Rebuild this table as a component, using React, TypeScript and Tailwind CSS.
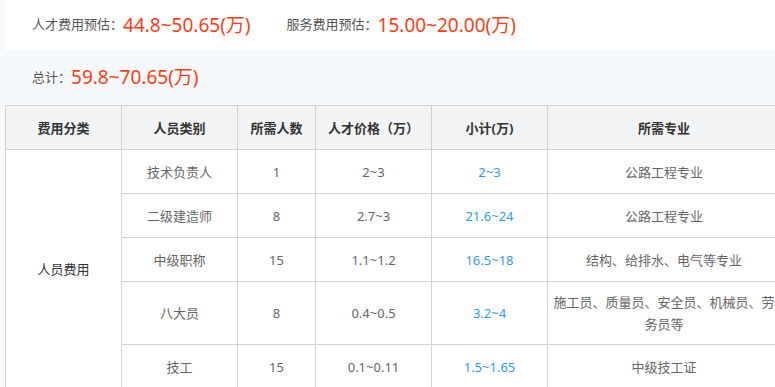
const rows = [
  { role: "技术负责人", count: "1", price: "2~3", subtotal: "2~3", major: "公路工程专业", h: "h-[44px]" },
  { role: "二级建造师", count: "8", price: "2.7~3", subtotal: "21.6~24", major: "公路工程专业", h: "h-[44px]" },
  { role: "中级职称", count: "15", price: "1.1~1.2", subtotal: "16.5~18", major: "结构、给排水、电气等专业", h: "h-[44px]" },
  { role: "八大员", count: "8", price: "0.4~0.5", subtotal: "3.2~4", major: "施工员、质量员、安全员、机械员、劳务员等", h: "h-[63px]" },
  { role: "技工", count: "15", price: "0.1~0.11", subtotal: "1.5~1.65", major: "中级技工证", h: "h-[44px]" },
];

const cell = "border border-[#d3d3d3] text-center align-middle px-[4px] leading-[22px]";

export default function App() {
  return (
    <div className="w-screen h-screen overflow-hidden bg-[#f5f9fc] font-['Noto_Sans','Noto_Sans_CJK_SC',sans-serif] text-[13px] text-[#666]">
      <div className="ml-[5px] h-[50px] bg-white flex items-center pl-[27px]">
        <span className="text-[13px] text-[#555]">人才费用预估：</span>
        <span className="text-[19px] text-[#ff3d12] mr-[36px]">44.8~50.65(万)</span>
        <span className="text-[13px] text-[#555]">服务费用预估：</span>
        <span className="text-[19px] text-[#ff3d12]">15.00~20.00(万)</span>
      </div>
      <div className="h-[55px] flex items-center pl-[32px]">
        <span className="text-[13px] text-[#555]">总计：</span>
        <span className="text-[19px] text-[#ff3d12]">59.8~70.65(万)</span>
      </div>
      <table className="ml-[5px] w-[775px] border-collapse table-fixed bg-white">
        <colgroup>
          <col className="w-[116px]" />
          <col className="w-[116px]" />
          <col className="w-[78px]" />
          <col className="w-[116px]" />
          <col className="w-[116px]" />
          <col className="w-[233px]" />
        </colgroup>
        <thead>
          <tr className="bg-[#f2f3f5] text-[#333] font-bold">
            <th className={`${cell} h-[44px]`}>费用分类</th>
            <th className={cell}>人员类别</th>
            <th className={cell}>所需人数</th>
            <th className={cell}>人才价格（万）</th>
            <th className={cell}>小计(万)</th>
            <th className={cell}>所需专业</th>
          </tr>
        </thead>
        <tbody>
          {rows.map((r, i) => (
            <tr key={r.role}>
              {i === 0 && (
                <td rowSpan={5} className={`${cell} text-[#333]`}>
                  人员费用
                </td>
              )}
              <td className={`${cell} ${r.h}`}>{r.role}</td>
              <td className={cell}>{r.count}</td>
              <td className={cell}>{r.price}</td>
              <td className={`${cell} text-[#2b9cf2]`}>{r.subtotal}</td>
              <td className={cell}>{r.major}</td>
            </tr>
          ))}
        </tbody>
      </table>
    </div>
  );
}
